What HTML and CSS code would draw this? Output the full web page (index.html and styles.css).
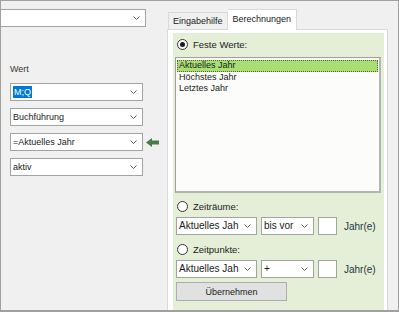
FILE: index.html
```html
<!DOCTYPE html>
<html lang="de">

<head>
  <meta charset="UTF-8" />
  <title>Berechnungen</title>
  <link rel="stylesheet" href="styles.css">
</head>

<body>
  <div class="window">
    <div class="left-col">
      <div class="combo combo-top">
        <span class="combo-text"></span>
        <svg class="chevron" width="7" height="4" viewBox="0 0 7 4"><polyline points="0.5,0.5 3.5,3.5 6.5,0.5" /></svg>
      </div>

      <div class="field-label">Wert</div>

      <div class="fields">
        <div class="field-row">
          <div class="combo combo-field">
            <span class="combo-text"><span class="selected">M;Q</span></span>
            <svg class="chevron" width="7" height="4" viewBox="0 0 7 4"><polyline points="0.5,0.5 3.5,3.5 6.5,0.5" /></svg>
          </div>
        </div>
        <div class="field-row">
          <div class="combo combo-field">
            <span class="combo-text">Buchführung</span>
            <svg class="chevron" width="7" height="4" viewBox="0 0 7 4"><polyline points="0.5,0.5 3.5,3.5 6.5,0.5" /></svg>
          </div>
        </div>
        <div class="field-row">
          <div class="combo combo-field">
            <span class="combo-text">=Aktuelles Jahr</span>
            <svg class="chevron" width="7" height="4" viewBox="0 0 7 4"><polyline points="0.5,0.5 3.5,3.5 6.5,0.5" /></svg>
          </div>
          <svg class="insert-arrow" width="13" height="9" viewBox="0 0 13 9">
            <polygon points="0,4.5 6,0 6,2.5 13,2.5 13,6.5 6,6.5 6,9" />
          </svg>
        </div>
        <div class="field-row">
          <div class="combo combo-field">
            <span class="combo-text">aktiv</span>
            <svg class="chevron" width="7" height="4" viewBox="0 0 7 4"><polyline points="0.5,0.5 3.5,3.5 6.5,0.5" /></svg>
          </div>
        </div>
      </div>
    </div>

    <div class="right-col">
      <div class="tabs">
        <div class="tab">Eingabehilfe</div>
        <div class="tab active">Berechnungen</div>
      </div>

      <div class="tab-page">
        <div class="calc-panel">
          <label class="radio-row">
            <span class="radio checked"></span>
            <span>Feste Werte:</span>
          </label>

          <ul class="value-list">
            <li class="selected-item">Aktuelles Jahr</li>
            <li>Höchstes Jahr</li>
            <li>Letztes Jahr</li>
          </ul>

          <label class="radio-row radio-periods">
            <span class="radio"></span>
            <span>Zeiträume:</span>
          </label>

          <div class="input-row">
            <div class="combo combo-year">
              <span class="combo-text">Aktuelles Jah</span>
              <svg class="chevron" width="7" height="4" viewBox="0 0 7 4"><polyline points="0.5,0.5 3.5,3.5 6.5,0.5" /></svg>
            </div>
            <div class="combo combo-op">
              <span class="combo-text">bis vor</span>
              <svg class="chevron" width="7" height="4" viewBox="0 0 7 4"><polyline points="0.5,0.5 3.5,3.5 6.5,0.5" /></svg>
            </div>
            <div class="num-box"></div>
            <span class="unit">Jahr(e)</span>
          </div>

          <label class="radio-row radio-points">
            <span class="radio"></span>
            <span>Zeitpunkte:</span>
          </label>

          <div class="input-row">
            <div class="combo combo-year">
              <span class="combo-text">Aktuelles Jah</span>
              <svg class="chevron" width="7" height="4" viewBox="0 0 7 4"><polyline points="0.5,0.5 3.5,3.5 6.5,0.5" /></svg>
            </div>
            <div class="combo combo-op">
              <span class="combo-text">+</span>
              <svg class="chevron" width="7" height="4" viewBox="0 0 7 4"><polyline points="0.5,0.5 3.5,3.5 6.5,0.5" /></svg>
            </div>
            <div class="num-box"></div>
            <span class="unit">Jahr(e)</span>
          </div>

          <button class="apply-btn">Übernehmen</button>
        </div>
      </div>
    </div>
  </div>
</body>

</html>
```

FILE: styles.css
```css
* {
  box-sizing: border-box;
}

body {
  margin: 0;
  font-family: 'Liberation Sans', Arial, sans-serif;
  font-size: 9px;
  color: #1a1a1a;
  background: #f0f0f0;
}

.window {
  display: flex;
  width: 399px;
  height: 312px;
  border: 1px solid #a0a0a0;
  border-bottom-width: 2px;
  background-color: #f0f0f0;
  overflow: hidden;
}

/* left column */

.left-col {
  width: 166px;
  flex-shrink: 0;
  padding-top: 8px;
}

.combo {
  display: flex;
  align-items: center;
  height: 18px;
  border: 1px solid #a3a3a3;
  background-color: #fff;
  padding-left: 2px;
  overflow: hidden;
}

.combo-text {
  flex: 1;
  white-space: nowrap;
  line-height: 12px;
}

.chevron {
  flex-shrink: 0;
  margin: 0 5px 0 3px;
}

.chevron polyline {
  fill: none;
  stroke: #606060;
  stroke-width: 1;
}

.combo-top {
  width: 145px;
  border-left: none;
}

.field-label {
  margin: 37px 0 0 9px;
  line-height: 11px;
  color: #3a3530;
}

.fields {
  display: flex;
  flex-direction: column;
  gap: 7px;
  margin: 8px 0 0 9px;
}

.field-row {
  display: flex;
  align-items: center;
  gap: 3px;
}

.combo-field {
  width: 133px;
}

.selected {
  background-color: #0078d7;
  color: #fff;
  padding: 1px 1px;
}

.insert-arrow polygon {
  fill: #4a7c4a;
}

/* right column */

.right-col {
  flex: 1;
  display: flex;
  flex-direction: column;
  padding-top: 8px;
}

.tabs {
  display: flex;
  align-items: flex-end;
  height: 20px;
  margin-left: 1px;
  position: relative;
  z-index: 1;
}

.tab {
  height: 17px;
  padding: 0 4px;
  line-height: 16px;
  border: 1px solid #d9d9d9;
  border-bottom: none;
  background-color: #f0f0f0;
  white-space: nowrap;
}

.tab.active {
  height: 21px;
  margin-bottom: -1px;
  padding: 0 5px;
  line-height: 18px;
  background-color: #fff;
  border-left: none;
}

.tab-page {
  flex: 1;
  width: 221px;
  border: 1px solid #d9d9d9;
  border-bottom: none;
  background-color: #fff;
  padding: 3px 3px 0 5px;
  display: flex;
}

.calc-panel {
  flex: 1;
  background-color: #e5efd7;
  padding: 4px 0 0 2px;
  display: flex;
  flex-direction: column;
  align-items: flex-start;
}

.radio-row {
  display: flex;
  align-items: center;
  gap: 5px;
  height: 14px;
  padding-left: 2px;
  font-size: 9.5px;
  color: #222;
}

.radio {
  width: 11px;
  height: 11px;
  border: 1px solid #333;
  border-radius: 50%;
  background-color: #fff;
  position: relative;
}

.radio.checked::after {
  content: "";
  position: absolute;
  top: 2px;
  left: 2px;
  width: 5px;
  height: 5px;
  border-radius: 50%;
  background-color: #1a1a1a;
}

.value-list {
  list-style: none;
  margin: 6px 0 0 0;
  padding: 2px 1px;
  width: 206px;
  height: 136px;
  border: 1px solid #a0a0a0;
  border-right-width: 2px;
  border-bottom-width: 2px;
  border-right-color: #b4b4b4;
  border-bottom-color: #b4b4b4;
  background-color: #fcfcfa;
}

.value-list li {
  height: 11px;
  line-height: 11px;
  padding-left: 2px;
}

.value-list li.selected-item {
  height: 12px;
  background-color: #a9de74;
  outline: 1px dotted #4c6b33;
  outline-offset: -1px;
}

.radio-periods {
  margin-top: 6px;
}

.radio-points {
  margin-top: 7px;
}

.input-row {
  display: flex;
  align-items: center;
  margin-top: 4px;
  padding-left: 1px;
  font-size: 10px;
}

.input-row .chevron {
  margin-left: 4px;
}

.combo-year {
  width: 81px;
}

.combo-op {
  width: 53px;
  margin-left: 4px;
}

.num-box {
  width: 19px;
  height: 18px;
  margin-left: 4px;
  border: 1px solid #a3a3a3;
  background-color: #fff;
}

.unit {
  margin-left: 7px;
  color: #243447;
}

.apply-btn {
  margin: 4px 0 0 1px;
  width: 111px;
  height: 19px;
  padding: 0;
  font-family: inherit;
  font-size: 9px;
  color: #1a1a1a;
  background-color: #e1e1e1;
  border: 1px solid #adadad;
  border-radius: 0;
}
```
